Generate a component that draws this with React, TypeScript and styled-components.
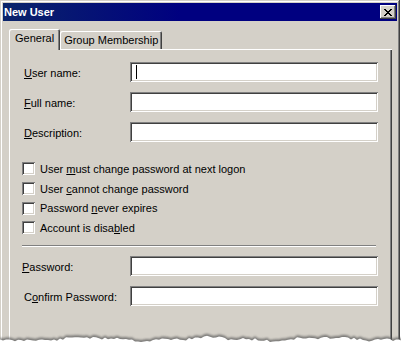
import React from "react";
import styled, { createGlobalStyle } from "styled-components";

const face = "#d4d0c8";
const shadow = "#808080";
const darkShadow = "#404040";

const GlobalStyle = createGlobalStyle`
  html, body {
    margin: 0;
    padding: 0;
    background: #ffffff;
  }
  body {
    font-family: "Liberation Sans", Arial, sans-serif;
    font-size: 11px;
    color: #000;
  }
`;

// pseudo random torn paper edge, computed once
const tornPath = (() => {
  let seed = 11;
  const rnd = () => {
    seed = (seed * 9301 + 49297) % 233280;
    return seed / 233280;
  };
  const pts: string[] = [];
  for (let x = 0; x <= 404; x += 3) {
    const y = 11 + Math.sin(x / 19) * 1.4 + Math.sin(x / 7) * 0.8 + (rnd() - 0.5) * 2.6;
    pts.push(`${x},${y.toFixed(1)}`);
  }
  return `M0,24 L${pts.join(" L")} L404,24 Z`;
})();

const Page = styled.div`
  position: relative;
  width: 401px;
  height: 350px;
  overflow: hidden;
`;

const Window = styled.div`
  width: 400px;
  height: 350px;
  box-sizing: border-box;
  padding: 3px;
  background: ${face};
  box-shadow: inset -1px -1px ${darkShadow}, inset 1px 1px ${face},
    inset -2px -2px ${shadow}, inset 2px 2px #ffffff;
`;

const TitleBar = styled.div`
  height: 18px;
  display: flex;
  align-items: center;
  justify-content: space-between;
  padding-left: 1px;
  background: linear-gradient(to right, #0a246a 0%, #000080 45%, #000080 100%);

  h1 {
    margin: 0;
    font-size: 11px;
    font-weight: 700;
    color: #ffffff;
    line-height: 18px;
  }
`;

const CloseButton = styled.div`
  width: 16px;
  height: 14px;
  margin-right: 1px;
  display: flex;
  align-items: center;
  justify-content: center;
  background: ${face};
  box-shadow: inset -1px -1px ${darkShadow}, inset 1px 1px #ffffff,
    inset -2px -2px ${shadow}, inset 2px 2px ${face};

  svg {
    display: block;
    margin-left: -1px;
  }
`;

const Body = styled.div`
  padding: 8px 0 0 6px;
`;

const TabStrip = styled.div`
  display: flex;
  align-items: flex-end;
  height: 20px;
`;

const Tab = styled.div<{ $active?: boolean }>`
  position: relative;
  z-index: ${({ $active }) => ($active ? 1 : 0)};
  box-sizing: border-box;
  height: ${({ $active }) => ($active ? "21px" : "18px")};
  margin-bottom: ${({ $active }) => ($active ? "-1px" : "0")};
  padding: ${({ $active }) => ($active ? "3px 6px 0 6px" : "3px 4px 0 4px")};
  background: ${face};
  border-radius: 2px 2px 0 0;
  box-shadow: inset 1px 1px #ffffff, inset -1px 0 ${darkShadow},
    inset -2px 0 ${shadow};
  white-space: nowrap;
  line-height: 13px;
`;

const Panel = styled.div`
  width: 383px;
  height: 300px;
  box-sizing: border-box;
  padding: 13px 14px 0 15px;
  box-shadow: inset 1px 1px #ffffff, inset -1px 0 ${darkShadow},
    inset -2px 0 ${shadow};
`;

const FieldGroup = styled.div`
  display: flex;
  flex-direction: column;
  gap: 10px;
`;

const FieldRow = styled.div`
  display: grid;
  grid-template-columns: 106px 248px;
  align-items: center;
`;

const Label = styled.div<{ $shift?: number }>`
  margin-left: ${({ $shift }) => $shift ?? 0}px;
  padding-top: 2px;
  white-space: nowrap;
`;

const Key = styled.span`
  text-decoration: underline;
`;

const TextBox = styled.div`
  position: relative;
  height: 20px;
  box-sizing: border-box;
  background: #ffffff;
  box-shadow: inset 1px 1px ${shadow}, inset -1px -1px #ffffff,
    inset 2px 2px ${darkShadow}, inset -2px -2px ${face};
`;

const Caret = styled.span`
  position: absolute;
  left: 6px;
  top: 3px;
  width: 1px;
  height: 14px;
  background: #000;
`;

const CheckGroup = styled.div`
  margin: 17px 0 0 -2px;
  display: flex;
  flex-direction: column;
`;

const CheckRow = styled.div`
  height: 19.7px;
  display: flex;
  align-items: center;
  gap: 5px;
`;

const CheckBox = styled.span`
  width: 13px;
  height: 13px;
  flex: none;
  box-sizing: border-box;
  background: #ffffff;
  box-shadow: inset 1px 1px ${shadow}, inset -1px -1px #ffffff,
    inset 2px 2px ${darkShadow}, inset -2px -2px ${face};
`;

const Separator = styled.div`
  width: 354px;
  margin: 7px 0 9px -2px;
  border-top: 1px solid ${shadow};
  border-bottom: 1px solid #ffffff;
`;

const TornEdge = styled.svg`
  position: absolute;
  left: 0;
  top: 328px;
`;

function CloseGlyph() {
  const rows = ["XX....XX", ".XX..XX.", "..XXXX..", "...XX...", "..XXXX..", ".XX..XX.", "XX....XX"];
  return (
    <svg width="8" height="7" viewBox="0 0 8 7" shapeRendering="crispEdges">
      {rows.flatMap((row, y) =>
        row.split("").map((c, x) =>
          c === "X" ? <rect key={`${x}-${y}`} x={x} y={y} width="1" height="1" fill="#000" /> : null
        )
      )}
    </svg>
  );
}

export default function App() {
  return (
    <Page>
      <GlobalStyle />
      <Window>
        <TitleBar>
          <h1>New User</h1>
          <CloseButton>
            <CloseGlyph />
          </CloseButton>
        </TitleBar>

        <Body>
          <TabStrip>
            <Tab $active>General</Tab>
            <Tab>Group Membership</Tab>
          </TabStrip>

          <Panel>
            <FieldGroup>
              <FieldRow>
                <Label>
                  <Key>U</Key>ser name:
                </Label>
                <TextBox>
                  <Caret />
                </TextBox>
              </FieldRow>
              <FieldRow>
                <Label>
                  <Key>F</Key>ull name:
                </Label>
                <TextBox />
              </FieldRow>
              <FieldRow>
                <Label>
                  <Key>D</Key>escription:
                </Label>
                <TextBox />
              </FieldRow>
            </FieldGroup>

            <CheckGroup>
              <CheckRow>
                <CheckBox />
                <span>
                  User <Key>m</Key>ust change password at next logon
                </span>
              </CheckRow>
              <CheckRow>
                <CheckBox />
                <span>
                  User <Key>c</Key>annot change password
                </span>
              </CheckRow>
              <CheckRow>
                <CheckBox />
                <span>
                  Password <Key>n</Key>ever expires
                </span>
              </CheckRow>
              <CheckRow>
                <CheckBox />
                <span>
                  Account is disa<Key>b</Key>led
                </span>
              </CheckRow>
            </CheckGroup>

            <Separator />

            <FieldGroup>
              <FieldRow>
                <Label $shift={-2}>
                  <Key>P</Key>assword:
                </Label>
                <TextBox />
              </FieldRow>
              <FieldRow>
                <Label>
                  C<Key>o</Key>nfirm Password:
                </Label>
                <TextBox />
              </FieldRow>
            </FieldGroup>
          </Panel>
        </Body>
      </Window>

      <TornEdge width="401" height="22" viewBox="0 0 401 22">
        <defs>
          <filter id="tornBlur" x="-5%" y="-50%" width="110%" height="200%">
            <feGaussianBlur stdDeviation="1.1" />
          </filter>
        </defs>
        <path d={tornPath} transform="translate(0,-2)" fill="#5a5a5a" opacity="0.75" filter="url(#tornBlur)" />
        <path d={tornPath} fill="#ffffff" />
      </TornEdge>
    </Page>
  );
}
